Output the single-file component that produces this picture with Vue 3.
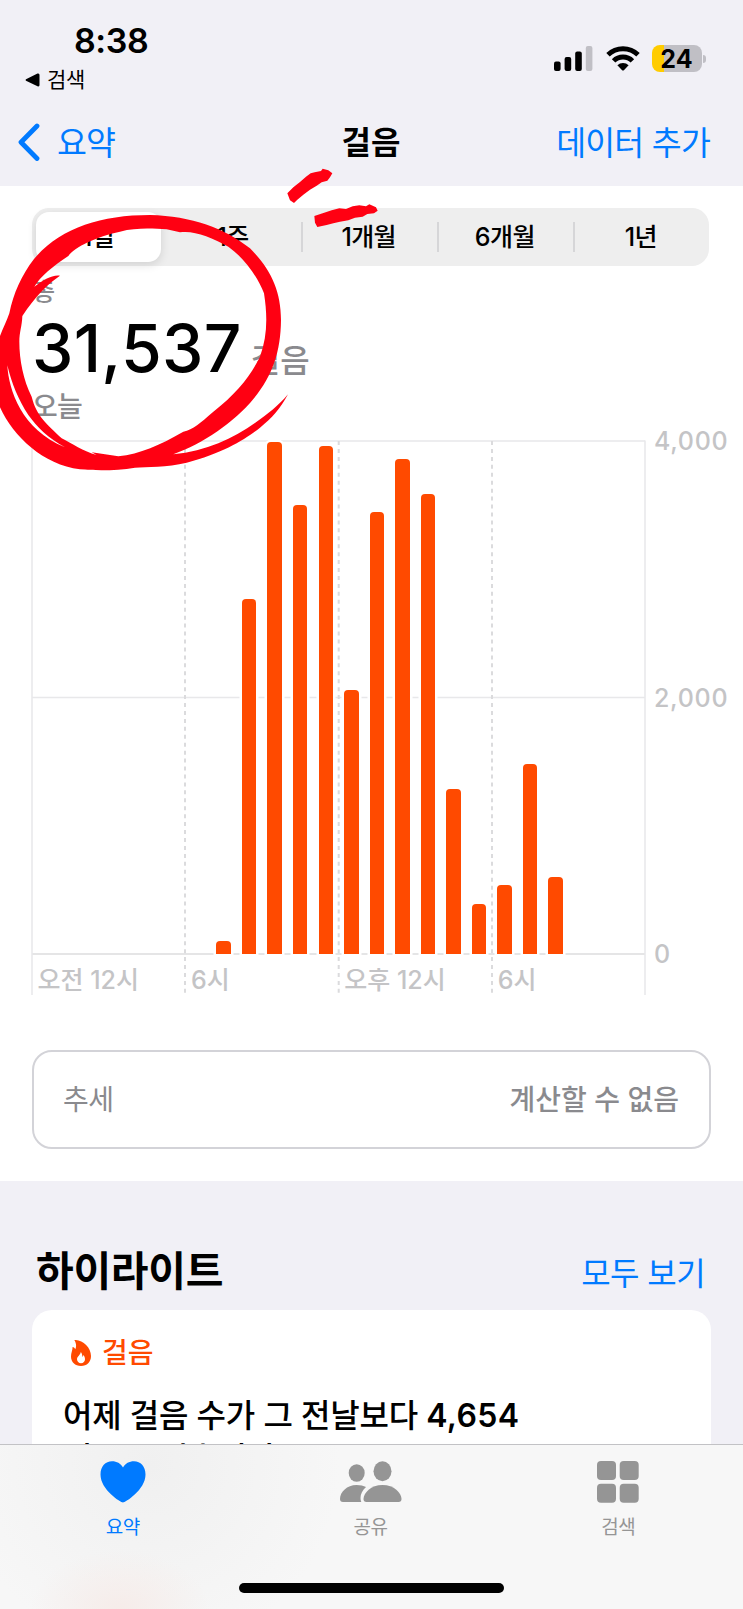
<template>
  <div class="phone">
    <header class="top">
      <div class="status">
        <div class="status-left">
          <div class="time">8:38</div>
          <div class="back-app">
            <svg width="15" height="14" viewBox="0 0 15 14">
              <path d="M1 6.2 L12.5 .6 Q14.5 0 14.5 2 V12 Q14.5 14 12.5 13.3 L1 7.8 Q0 7 1 6.2Z" />
            </svg>
            <span>검색</span>
          </div>
        </div>
        <div class="status-right">
          <svg class="signal" width="39" height="26" viewBox="0 0 39 26">
            <rect x="0" y="15.5" width="6.6" height="9.5" rx="2" />
            <rect x="10.6" y="11" width="6.6" height="14" rx="2" />
            <rect x="21.2" y="5.5" width="6.6" height="19.5" rx="2" />
            <rect x="31.8" y="0" width="6.6" height="25" rx="2" fill="#c0bfc5" />
          </svg>
          <svg class="wifi" width="34" height="26" viewBox="0 0 34 26">
            <g fill="none" stroke="#000" stroke-width="4.9">
              <path d="M2 8.8 A21.5 21.5 0 0 1 32 8.8" />
              <path d="M7.6 14.9 A13.2 13.2 0 0 1 26.4 14.9" />
            </g>
            <path d="M11.4 19.2 A8 8 0 0 1 22.6 19.2 L17.9 24.2 Q17 25 16.1 24.2Z" />
          </svg>
          <div class="battery"><span>24</span></div>
          <i class="battery-cap"></i>
        </div>
      </div>
      <nav class="nav">
        <a class="nav-back">
          <svg width="23" height="38" viewBox="0 0 23 38">
            <path d="M20 3 L4 19.200 L20 35.500" fill="none" stroke="#007aff" stroke-width="4.8" stroke-linecap="round" stroke-linejoin="round" />
          </svg>
          <span>요약</span>
        </a>
        <h1>걸음</h1>
        <a class="nav-add">데이터 추가</a>
      </nav>
    </header>

    <section class="panel">
      <div class="segments">
        <button
          v-for="(item, i) in ranges"
          :key="item"
          :class="{ active: i === current, divided: i > current + 1 }"
          @click="current = i"
        >{{ item }}</button>
      </div>

      <div class="summary">
        <p class="label">총</p>
        <p class="total"><b>31,537</b><span>걸음</span></p>
        <p class="day">오늘</p>
      </div>

      <div class="chart">
        <div class="plot">
          <svg class="grid" width="615" height="555" viewBox="0 0 615 555">
            <g stroke="#e8e8ea" stroke-width="1.5">
              <path d="M1 1 H614 M1 257.5 H614" />
              <path d="M1 514 H614" stroke="#dcdcde" />
              <path d="M1 .5 V555 M614 .5 V555" />
            </g>
            <g stroke="#dbdbdd" stroke-width="2" stroke-dasharray="4 3.94">
              <path d="M154 1 V555 M307.7 1 V555 M461 1 V555" />
            </g>
          </svg>
          <div class="bars">
            <div v-for="(steps, hour) in hourly" :key="hour" class="slot">
              <div v-if="steps" class="bar" :style="{ height: steps / 4000 * 100 + '%' }"></div>
            </div>
          </div>
          <div class="x-axis">
            <span>오전 12시</span>
            <span>6시</span>
            <span>오후 12시</span>
            <span>6시</span>
          </div>
        </div>
        <div class="y-axis">
          <span>4,000</span>
          <span>2,000</span>
          <span>0</span>
        </div>
      </div>

      <div class="trend">
        <span>추세</span>
        <b>계산할 수 없음</b>
      </div>
    </section>

    <section class="highlights">
      <div class="section-head">
        <h2>하이라이트</h2>
        <a>모두 보기</a>
      </div>
      <div class="card">
        <div class="card-title">
          <svg width="20" height="26" viewBox="0 0 20 26">
            <path fill="#ff4a00" fill-rule="evenodd" d="M3.3 0 C11 -.5 20 7 20 16 C20 22 16 26 10 26 C4 26 0 22 0 16.5 C0 12.500 1.800 10.500 1.500 7 C3 7.300 3.800 8 4.300 9.300 C5.800 6.500 5 2.500 3.300 0Z M9.600 12 C9.800 14.600 6 16.300 6 19.300 C6 21.700 7.800 23.200 10 23.200 C12.400 23.200 14 21.500 14 19.200 C14 17.500 13.300 16 12.200 15 C12.200 16 11.900 16.500 11.300 17 C11.400 15 11 13 9.600 12Z" />
          </svg>
          <span>걸음</span>
        </div>
        <p>어제 걸음 수가 그 전날보다 <b>4,654</b><br />걸음 줄었습니다.</p>
      </div>
    </section>

    <footer class="tabs">
      <div class="tab-list">
        <a class="tab on">
          <svg width="46" height="42" viewBox="0 0 46 42">
            <path fill="#007aff" d="M23 41.500 C21 41.500 .5 29 .5 13.500 C.5 5.500 5.500 .3 12 .3 C17 .3 20.500 2.500 23 6.500 C25.500 2.500 29 .3 34 .3 C40.500 .3 45.500 5.500 45.500 13.500 C45.500 29 25 41.500 23 41.500Z" />
          </svg>
          <span>요약</span>
        </a>
        <a class="tab">
          <svg width="62" height="42" viewBox="0 0 62 42" fill="#959595">
            <ellipse cx="16.700" cy="12" rx="8" ry="8.800" />
            <ellipse cx="42.500" cy="10.300" rx="9" ry="10" />
            <path d="M16.500 24 C20.500 24 23.500 24.700 26 26 C22.500 29 20.500 33 20.500 37 Q20.500 39.500 21.300 41 H3 Q0 41 0 38 C0 31 7 24 16.500 24Z" />
            <path d="M42.500 24 C54 24 61.500 32 61.500 38 Q61.500 41 58.500 41 H26.500 Q23.500 41 23.500 38 C23.500 32 31 24 42.500 24Z" />
          </svg>
          <span>공유</span>
        </a>
        <a class="tab">
          <svg width="42" height="42" viewBox="0 0 42 42" fill="#959595">
            <rect width="19" height="19" rx="4" />
            <rect x="22.700" width="19" height="19" rx="4" />
            <rect y="22.700" width="19" height="19" rx="4" />
            <rect x="22.700" y="22.700" width="19" height="19" rx="4" />
          </svg>
          <span>검색</span>
        </a>
      </div>
      <div class="home-bar"></div>
    </footer>

    <!-- 손으로 그린 빨간 표시 -->
    <svg class="marker" width="743" height="480" viewBox="0 0 743 480">
      <g fill="#ff0012" transform="translate(0 160) scale(.33333)">
        <path
          fill-rule="evenodd"
          d="M28 460 C40 400 65 345 102 297 C180 205 300 165 450 165 C575 168 675 205 750 265 C810 325 843 390 843 480 C842 575 818 645 762 715 C700 790 610 850 520 883 C620 872 700 835 770 785 C800 765 838 735 864 703 C842 745 815 775 780 803 C740 835 670 880 560 908 C500 922 440 921 405 923 C350 932 290 932 240 928 C130 915 40 830 0 742 L-6 720 V545 C5 510 18 490 28 460Z
             M180 347 C155 344 130 360 103 380 C120 350 160 318 205 288 C225 260 290 230 360 215 C410 202 460 206 500 208 L540 217 C580 210 635 232 685 260 C735 295 775 355 792 400 C803 470 802 530 780 590 C750 650 710 700 640 755 C600 790 580 808 550 815 C480 855 420 882 355 889 L275 877 L290 885 C250 875 215 850 185 835 C140 790 110 770 95 710 C70 660 58 600 58 545 C58 515 66 500 67 468 C105 410 145 370 180 347Z
             M22 616 C26 690 65 810 195 862 C145 835 110 800 85 765 C55 720 35 670 22 616Z"
        />
      </g>
      <g fill="#ff0012" transform="translate(280 160) scale(.33333)">
        <path d="M22 100 L40 82 L60 66 L78 50 L92 40 L104 37 L123 33 L128 26 L145 31 L157 40 L150 52 L142 62 L125 67 L110 77 L90 89 L70 104 L52 119 L42 129 L30 121Z" />
        <path d="M103 168 L128 160 L155 151 L178 145 L198 147 L218 139 L238 136 L258 139 L268 133 L288 142 L293 152 L282 160 L262 162 L248 170 L225 173 L205 181 L180 185 L160 190 L140 195 L112 201 L105 188Z" />
      </g>
    </svg>
  </div>
</template>

<script setup>
import { ref } from 'vue';

const ranges = ['1일', '1주', '1개월', '6개월', '1년'];
const current = ref(0);

// 시간대별 걸음 수 (0시 ~ 23시)
const hourly = ref([
  0, 0, 0, 0, 0, 0, 0, 105,
  2768, 3992, 3504, 3960, 2060, 3445, 3862, 3590,
  1285, 390, 540, 1480, 600, 0, 0, 0,
]);
</script>

<style>
body {
  margin: 0;
}
</style>

<style scoped>
.phone {
  position: relative;
  display: flex;
  flex-direction: column;
  width: 743px;
  height: 1609px;
  overflow: hidden;
  background: #f1f0f6;
  color: #000;
  font-family: Inter, 'Noto Sans CJK KR', sans-serif;
}

h1,
h2,
p {
  margin: 0;
}

svg {
  display: block;
  flex: none;
}

/* 상단 */
.top {
  height: 186px;
  flex: none;
}

.status {
  display: flex;
  justify-content: space-between;
  height: 114px;
}

.status-left {
  padding: 21px 0 0 25px;
}

.time {
  padding-left: 49px;
  font-size: 34px;
  line-height: 40px;
  font-weight: 600;
  letter-spacing: -0.4px;
}

.back-app {
  display: flex;
  align-items: center;
  gap: 7px;
  margin-top: 7px;
  font-size: 21px;
  line-height: 24px;
}

.back-app span {
  letter-spacing: -0.3px;
}

.status-right {
  display: flex;
  align-items: flex-start;
  padding: 45px 37px 0 0;
}

.signal {
  margin: 1px 12.500px 0 0;
}

.wifi {
  margin: 1px 12px 0 0;
}

.battery {
  width: 50px;
  height: 27px;
  border-radius: 8px;
  background: linear-gradient(90deg, #ffcc00 12px, #c0bfc5 12px);
  text-align: center;
  font-size: 25px;
  line-height: 28px;
  font-weight: 700;
}

.battery-cap {
  width: 3px;
  height: 8px;
  margin: 10px 0 0 1.500px;
  border-radius: 0 4px 4px 0;
  background: #c0bfc5;
}

.nav {
  display: grid;
  grid-template-columns: 1fr auto 1fr;
  align-items: center;
  height: 56px;
  padding: 0 33px 0 17px;
  font-size: 32.500px;
  color: #007aff;
}

.nav-back {
  display: flex;
  align-items: center;
  gap: 17px;
}

.nav-back span,
.nav h1,
.nav-add {
  padding-bottom: 4px;
}

.nav-back span {
  letter-spacing: -0.8px;
}

.nav h1 {
  padding-left: 15px;
  font-size: 32px;
  font-weight: 600;
  color: #000;
}

.nav-add {
  text-align: right;
  letter-spacing: -0.8px;
}

/* 걸음 수 */
.panel {
  height: 995px;
  flex: none;
  box-sizing: border-box;
  padding: 21.500px 0 0 32px;
  background: #fff;
}

.segments {
  display: flex;
  width: 677px;
  height: 58px;
  border-radius: 17px;
  background: #eee;
}

.segments button {
  flex: 1;
  padding: 0;
  border: 0;
  background: none;
  font: 450 25px/56px Inter, 'Noto Sans CJK KR', sans-serif;
  letter-spacing: -0.6px;
  color: #000;
}

.segments .active {
  flex: 0 0 125px;
  height: 50px;
  margin: 4px 4px 4px 3.500px;
  border-radius: 13px;
  background: #fff;
  box-shadow: 0 3px 10px rgba(0, 0, 0, 0.12);
  line-height: 48px;
}

.segments .divided {
  background: linear-gradient(#d6d6d8, #d6d6d8) 0 14px / 2px 30px no-repeat;
}

.summary {
  height: 174.500px;
  color: #8a8a8e;
}

.label {
  padding: 12px 0 0 1px;
  font-size: 24px;
  line-height: 28px;
  font-weight: 500;
}

.total {
  display: flex;
  align-items: baseline;
  gap: 9px;
  height: 84px;
  line-height: 84px;
}

.total b {
  color: #000;
  font-size: 66px;
  font-weight: 500;
  letter-spacing: 0.3px;
}

.total span {
  font-size: 32px;
  font-weight: 500;
}

.day {
  padding-top: 1px;
  font-size: 28px;
  line-height: 32px;
  font-weight: 500;
  letter-spacing: -0.8px;
}

.chart {
  display: flex;
}

.plot {
  position: relative;
  width: 615px;
  height: 555px;
  margin-left: -1px;
}

.grid {
  position: absolute;
  inset: 0;
}

.bars {
  position: relative;
  display: flex;
  height: 513px;
  padding: 1px 1px 0;
}

.slot {
  display: flex;
  flex: 1;
  align-items: flex-end;
  justify-content: center;
}

.bar {
  width: 14.500px;
  border-radius: 4px 4px 0 0;
  background: #ff4a00;
  box-shadow: 0 0 0 2.500px #fff;
}

.x-axis {
  display: grid;
  grid-template-columns: repeat(4, 153.400px);
  font-size: 25px;
  line-height: 52px;
  font-weight: 450;
  color: #c4c4c6;
}

.x-axis span {
  padding-left: 6.500px;
}

.y-axis {
  display: flex;
  flex-direction: column;
  justify-content: space-between;
  height: 543px;
  margin: -14px 0 0 8px;
  font-size: 25px;
  line-height: 30px;
  font-weight: 450;
  letter-spacing: 0.7px;
  color: #c4c4c6;
}

.trend {
  display: flex;
  justify-content: space-between;
  align-items: center;
  box-sizing: border-box;
  width: 679px;
  height: 99px;
  margin-top: 55px;
  padding: 0 30px 3px 29px;
  border: 2px solid #d3d3d8;
  border-radius: 20px;
  font-size: 28px;
  color: #8a8a8e;
}

.trend span {
  letter-spacing: -0.6px;
}

.trend b {
  font-weight: 500;
}

/* 하이라이트 */
.highlights {
  flex: 1;
  min-height: 0;
  overflow: hidden;
  padding: 0 32px;
}

.section-head {
  display: flex;
  align-items: center;
  justify-content: space-between;
  height: 78px;
  padding: 51px 6px 0 4px;
}

.section-head h2 {
  font-size: 41px;
  line-height: 44px;
  font-weight: 700;
  letter-spacing: -0.3px;
}

.section-head a {
  font-size: 32px;
  letter-spacing: -0.6px;
  color: #007aff;
}

.card {
  height: 200px;
  padding: 26px 32px 0;
  border-radius: 20px;
  background: #fff;
}

.card-title {
  display: flex;
  align-items: center;
  gap: 11px;
  padding-left: 7px;
  font-size: 28px;
  line-height: 34px;
  font-weight: 500;
  color: #ff4a00;
}

.card p {
  margin-left: -1px;
  padding-top: 24px;
  font-size: 32px;
  line-height: 43px;
  font-weight: 500;
  letter-spacing: -0.2px;
  white-space: nowrap;
}

.card b {
  font-weight: 600;
  letter-spacing: 0.3px;
}

/* 하단 탭 */
.tabs {
  height: 165px;
  flex: none;
  box-sizing: border-box;
  border-top: 1.500px solid #c2c2c5;
  background: radial-gradient(ellipse 90px 60px at 120px 165px, #f6ece9, transparent),
    radial-gradient(ellipse 190px 190px at 150px 20px, #f0f0f0, transparent), #f7f7f7;
}

.tab-list {
  display: flex;
  height: 138px;
  margin: 0 1px 0 -1px;
}

.tab {
  display: flex;
  flex: 1;
  flex-direction: column;
  align-items: center;
  padding-top: 16px;
  font-size: 19px;
  color: #959595;
}

.tab span {
  margin-top: 13px;
  line-height: 24px;
  letter-spacing: -0.5px;
}

.on {
  color: #007aff;
}

.home-bar {
  width: 265px;
  height: 10px;
  margin: 0 auto;
  border-radius: 5px;
  background: #000;
}

.marker {
  position: absolute;
  top: 0;
  left: 0;
  pointer-events: none;
}
</style>
